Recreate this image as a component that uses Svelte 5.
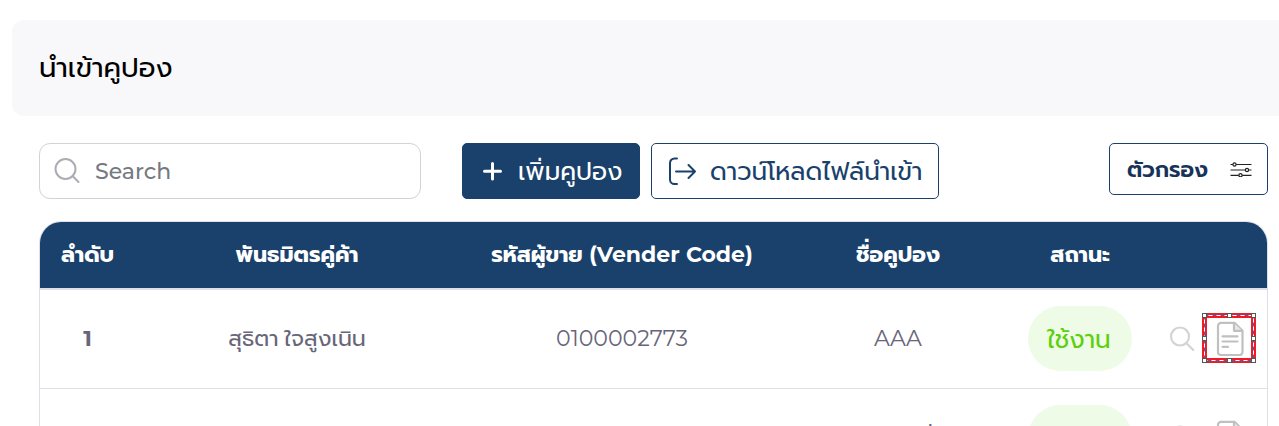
<script>
  const columns = ['ลำดับ', 'พันธมิตรคู่ค้า', 'รหัสผู้ขาย (Vender Code)', 'ชื่อคูปอง', 'สถานะ'];
  const rows = [
    { no: '1', partner: 'สุธิตา ใจสูงเนิน', code: '0100002773', name: 'AAA', status: 'ใช้งาน', selected: true },
    { no: '', partner: '', code: '', name: 'คูปองที่', status: 'ใช้งาน', selected: false }
  ];
</script>

<div class="page">
  <header><h1>นำเข้าคูปอง</h1></header>

  <div class="toolbar">
    <div class="search">
      <svg width="28" height="28" viewBox="0 0 28 28" fill="none" stroke="#aeabb5" stroke-width="2" stroke-linecap="round">
        <circle cx="11.500" cy="12" r="10" /><path d="M18.800 19.300 24.500 25" />
      </svg>
      <span class="placeholder">Search</span>
    </div>
    <button class="add">
      <svg width="20" height="20" viewBox="0 0 20 20" fill="none" stroke="#fff" stroke-width="3" stroke-linecap="round">
        <path d="M10.500 2.500v15.500M2.500 10.200H18.500" />
      </svg>
      <span>เพิ่มคูปอง</span>
    </button>
    <button class="download">
      <svg width="30" height="30" viewBox="0 0 30 30" fill="none" stroke="#19416c" stroke-width="2" stroke-linecap="round" stroke-linejoin="round">
        <path d="M10 2.500H7.500A4.500 4.500 0 0 0 3 7v16.500A4.500 4.500 0 0 0 7.500 28H10M9 15.500h19M21.500 9l6.500 6.500-6.500 6.500" />
      </svg>
      <span>ดาวน์โหลดไฟล์นำเข้า</span>
    </button>
    <button class="filter">
      <span>ตัวกรอง</span>
      <svg width="22" height="16" viewBox="0 0 22 16" fill="#fff" stroke="#222" stroke-width="1.200">
        <path d="M.5 3.500h21M.5 9h21M.5 14.300h21" />
        <circle cx="4.500" cy="3.500" r="1.600" /><circle cx="17" cy="9" r="1.600" /><circle cx="10.500" cy="14.300" r="1.600" />
      </svg>
    </button>
  </div>

  <div class="table">
    <div class="row head">
      {#each columns as c}
        <div class="cell"><span>{c}</span></div>
      {/each}
    </div>
    {#each rows as r}
      <div class="row body">
        <div class="cell no"><span>{r.no}</span></div>
        <div class="cell"><span>{r.partner}</span></div>
        <div class="cell"><span>{r.code}</span></div>
        <div class="cell"><span>{r.name}</span></div>
        <div class="cell"><div class="pill"><span>{r.status}</span></div></div>
        <div class="cell actions">
          <svg width="26" height="26" viewBox="0 0 26 26" fill="none" stroke="#d4d4d4" stroke-width="2.200" stroke-linecap="round">
            <circle cx="11" cy="10.500" r="9" /><path d="m17.700 17.500 6.500 6.500" />
          </svg>
          <div class="doc">
            <svg width="28" height="36" viewBox="0 0 28 36" fill="none" stroke="#c0c0c0" stroke-width="2.200" stroke-linejoin="round" stroke-linecap="round">
              <path d="M5 1.800h13.500l8 8V31a3 3 0 0 1-3 3H5a3 3 0 0 1-3-3V4.800a3 3 0 0 1 3-3Z" />
              <path d="M18 2.300v7.500h8" fill="#e8e8e8" />
              <path d="M6.500 15.300h15M6.500 20.500h15M6.500 25.800h5.500" />
            </svg>
            {#if r.selected}
              <svg class="selection" width="54" height="50" viewBox="0 0 54 50" fill="none">
                <rect x="2.500" y="2.500" width="49" height="45" stroke="#ee1c25" stroke-width="5" />
                <rect x="2.500" y="2.500" width="49" height="45" stroke="#fff" stroke-width="1" />
                <rect x="2.500" y="2.500" width="49" height="45" stroke="#1677d2" stroke-width="1" stroke-dasharray="4 4" />
                {#each [[0, 0], [25, 0], [49, 0], [0, 23], [49, 23], [0, 45], [25, 45], [49, 45]] as [x, y]}
                  <rect x={x + 0.5} y={y + 0.5} width="4" height="4" fill="#fff" stroke="#555" />
                {/each}
              </svg>
            {/if}
          </div>
        </div>
      </div>
    {/each}
  </div>
</div>

<style>
  .page {
    box-sizing: border-box;
    width: 1279px;
    height: 426px;
    padding: 20px 0 0 12px;
    overflow: hidden;
    background: #fff;
    font-family: Montserrat, Prompt, Kanit, "Noto Sans Thai", sans-serif;
  }
  header {
    box-sizing: border-box;
    display: flex;
    align-items: center;
    height: 96px;
    padding-left: 27px;
    border-radius: 12px 0 0 12px;
    background: #f8f8fb;
  }
  h1 { margin: 0; font-size: 27.5px; font-weight: 400; color: #000; }
  span { white-space: nowrap; }
  .toolbar { display: flex; align-items: flex-start; margin: 27px 11px 0 27px; height: 56px; }
  .search, button { box-sizing: border-box; display: flex; align-items: center; background: #fff; }
  .search { width: 382px; height: 56px; padding-left: 14px; gap: 13px; border: 1px solid #ced4da; border-radius: 11px; }
  .placeholder { font-size: 22px; font-weight: 500; color: #757982; }
  button { padding: 0; border: 1px solid #19416c; border-radius: 5px; height: 56px; font-family: inherit; font-size: 24.8px; color: #19416c; }
  .add { width: 178px; margin-left: 41px; padding-left: 19px; gap: 16px; background: #19416c; color: #fff; }
  .download { width: 288px; margin-left: 11px; padding-left: 15px; gap: 13px; }
  .filter { width: 159px; height: 52px; margin-left: auto; padding: 0 15px 0 17px; justify-content: space-between; font-size: 22px; font-weight: 600; color: #17335a; }
  .table { box-sizing: border-box; width: 1229px; margin: 22px 0 0 27px; border: 1px solid #dfdfe7; border-radius: 22px 22px 0 0; overflow: hidden; }
  .row { display: grid; grid-template-columns: 95px 324px 326px 226px 138px 118px; }
  .head { height: 66px; background: #19416c; color: #fff; font-size: 22px; font-weight: 700; border-bottom: 2px solid #dee0e8; }
  .body { height: 98px; border-bottom: 1px solid #dfdfe7; color: #686579; font-size: 22.1px; }
  .cell { box-sizing: border-box; display: flex; align-items: center; justify-content: center; min-width: 0; padding-bottom: 2px; }
  .no { font-weight: 700; }
  .pill { box-sizing: border-box; display: flex; align-items: center; justify-content: center; width: 104px; height: 65px; padding: 2px 2px 0 0; border-radius: 33px; background: #eefbe7; color: #5bd00b; font-size: 24.8px; }
  .actions { justify-content: flex-start; padding: 0 0 0 20px; gap: 21px; }
  .doc { position: relative; display: flex; }
  .selection { position: absolute; left: -14px; top: -8px; }
</style>
